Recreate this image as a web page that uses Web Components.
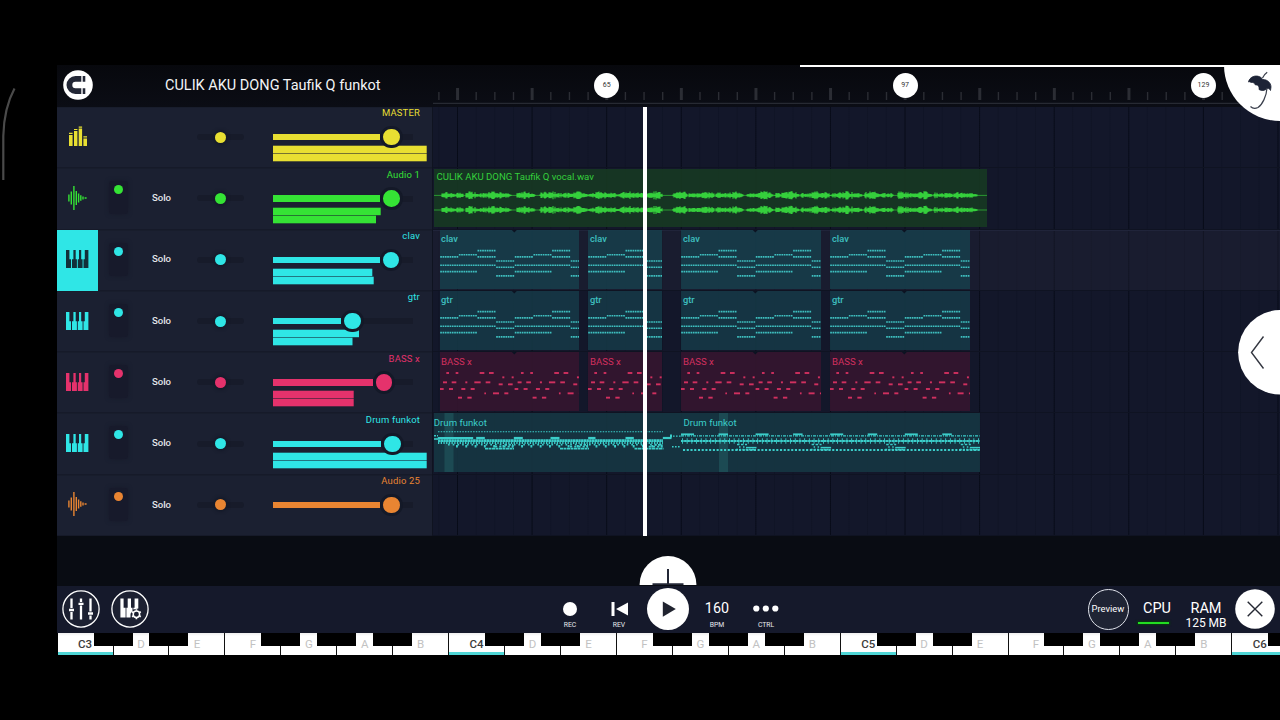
<!DOCTYPE html>
<html lang="en">
<head>
<meta charset="utf-8">
<title>CULIK AKU DONG Taufik Q funkot</title>
<style>
  html, body { margin: 0; background: #000; }
  body { width: 1280px; height: 720px; overflow: hidden; font-family: Roboto, "Liberation Sans", sans-serif; }
</style>
</head>
<body>
<daw-app></daw-app>

<script>
const BAR8 = 74.6;          // eight bars on the time line
const YELLOW = '#e8df32', GREEN = '#35e335', CYAN = '#2fe6e6', PINK = '#e5326c', ORANGE = '#e98532';

let tracks = [
  { name: 'MASTER', icon: 'master', color: YELLOW, volume: 118.7, meters: [153.7, 153.7] },
  { name: 'Audio 1', icon: 'wave', color: GREEN, volume: 118.7, meters: [107.7, 103] },
  { name: 'clav', icon: 'piano', color: CYAN, volume: 118, meters: [99.3, 100.7], selected: true },
  { name: 'gtr', icon: 'piano', color: CYAN, volume: 79.7, meters: [86, 79.5] },
  { name: 'BASS x', icon: 'piano', color: PINK, volume: 111, meters: [80.7, 80.7] },
  { name: 'Drum funkot', icon: 'piano', color: CYAN, volume: 119.7, meters: [153.7, 153.7] },
  { name: 'Audio 25', icon: 'wave', color: ORANGE, volume: 118.7, meters: [0, 0] }
];

// gap = free space before the clip
let fourClips = (name, kind) => [
  { name, kind, gap: 6.6, width: 139.9 },
  { name, kind, gap: 9, width: 74 },
  { name, kind, gap: 19, width: 140 },
  { name, kind, gap: 9, width: 140 }
];
let lanes = [
  [],
  [{ name: 'CULIK AKU DONG Taufik Q vocal.wav', kind: 'audio', gap: 0.5, width: 553.5 }],
  fourClips('clav', 'clav'),
  fourClips('gtr', 'gtr'),
  fourClips('BASS x', 'bass'),
  [
    { name: 'Drum funkot', kind: 'drum1', gap: 0.5, width: 247.5 },
    { name: 'Drum funkot', kind: 'drum2', gap: 0, width: 298.6 }
  ],
  []
];

const icons = {
  master: `<svg width="22" height="24" viewBox="0 0 22 24" fill="currentColor">
    <path d="M2 10h3.6v11H2zM7 6h3.4v15H7zM11.7 3.6h3.4V21h-3.4zM16.4 13.5H20V21h-3.6z"/>
    <path d="M2 7.8h3.6v1.2H2zM7 3.9h3.4v1.2H7zM11.7 1.5h3.4v1.2h-3.4zM16.4 11.3H20v1.1h-3.6z"/></svg>`,
  wave: `<svg width="22" height="26" viewBox="0 0 22 26" stroke="currentColor" stroke-width="1.4">
    <path d="M1.9 9.5v7M4.3 6.5v13M6.9 1v24M9.3 6v14M11.6 8.6v8.8M13.8 10.3v5.4M16 11.5v3M17.6 13h2"/></svg>`,
  piano: `<svg width="22.4" height="18" viewBox="0 0 22.4 18" fill="currentColor">
    <path d="M0 0h3.4v9.2H5V18H0zM7.4 0h2.3v9.2h1.2V18H6V9.2h1.4zM13 0h2.2v9.2h1.4V18h-4.8V9.2H13zM18.8 0h3.6v18h-4.9V9.2h1.3z"/></svg>`
};

class TrackHeader extends HTMLElement {
  constructor() {
    super();
    this.attachShadow({ mode: 'open' });
  }
  connectedCallback() {
    const t = this.track;
    const master = t.icon === 'master';
    this.shadowRoot.innerHTML = `
      <style>
        :host {
          display: grid; grid-template-columns: 41px 41.5px 44px 73px 1fr;
          height: 61.3px; box-sizing: border-box; background: #1b2031;
          border-bottom: 1px solid #161a29; border-top: 1px solid #181d2c; color: ${t.color};
        }
        .icon { display: flex; align-items: center; justify-content: center; padding-bottom: 2px; }
        .icon svg { display: block; }
        .icon.selected { background: ${CYAN}; color: #123039; margin: -1px 0; }
        .mute { display: flex; justify-content: center; padding-top: 12px; }
        .mute i { width: 19px; height: 33px; border-radius: 3px; background: #171a2b; box-shadow: 0 0 4px #171a2b; display: flex; justify-content: center; }
        .mute b { width: 9px; height: 9px; margin-top: 4px; border-radius: 50%; background: currentColor; }
        .solo { color: #e4e6ea; font-size: 9.6px; font-weight: 500; line-height: 12px; padding-top: 22.8px; text-align: center; }
        .pan { display: flex; align-items: center; justify-content: center; padding-bottom: 1px; }
        .pan i { width: 47px; height: 6px; border-radius: 3px; background: #171b2a; display: flex; align-items: center; justify-content: center; }
        .pan b { width: 11px; height: 11px; border-radius: 50%; background: currentColor; box-shadow: 0 0 3px 2px #151a29; }
        .right { display: flex; flex-direction: column; padding-left: 16.5px; }
        .name { font-size: 9.45px; letter-spacing: .02em; line-height: 12px; height: 12px; margin-top: -.6px; padding-right: 12px; text-align: right; white-space: pre; }
        .vol { display: flex; align-items: center; height: 16px; margin-top: 9.9px; width: 140px; z-index: 1;
          background: linear-gradient(#171b2a, #171b2a) 0 5px / 140px 6px no-repeat; }
        .fill { height: 6.4px; width: ${t.volume - 11.5}px; background: currentColor; }
        .knob { width: 16.4px; height: 16.4px; border-radius: 50%; background: currentColor; border: 3.3px solid #141928; margin: -3.5px 0 -3.5px .1px; flex: none; }
        .meter { display: block; overflow: visible; }
      </style>
      <div class="icon ${t.selected ? 'selected' : ''}">${icons[t.icon]}</div>
      <div class="mute">${master ? '' : '<i><b></b></i>'}</div>
      <div class="solo">${master ? '' : 'Solo'}</div>
      <div class="pan"><i><b></b></i></div>
      <div class="right">
        <div class="name"><slot></slot></div>
        <div class="vol"><div class="fill"></div><div class="knob"></div></div>
        <svg class="meter" width="154" height="17" fill="currentColor">
          <rect y=".7" width="${t.meters[0]}" height="7.5"/>
          <rect y="8.7" width="${t.meters[1]}" height="7.6"/>
        </svg>
      </div>`;
  }
}

// one horizontal run of notes
function run(x1, x2, y, h, dash) {
  return `<path d="M${x1} ${y}H${x2}" stroke-width="${h}" ${dash ? `stroke-dasharray="${dash}"` : ''}/>`;
}

function drawChords(width) {
  const seg = BAR8 / 4;
  const rows = [[26.9, 35.3, 41.6], [24.7, 35.3, 41.6], [20.6, 26.9, 35.3], [31, 37.3, 45.9]];
  let out = '';
  for (let i = 0; i * seg < width; i++) {
    for (const y of rows[i % 4]) {
      out += run(i * seg + 0.2, (i + 1) * seg - 0.2, y, 1.6, '1.7 .63');
    }
  }
  return out;
}

function drawBass(width) {
  // x1, x2, y in thirds of a pixel
  const notes = [
    [19, 27, 69], [47, 55, 69], [119, 133, 69], [147, 161, 69], [187, 193, 82], [215, 221, 82],
    [9, 21, 97], [35, 49, 97], [76, 82, 97], [103, 122, 97], [137, 151, 97], [176, 188, 103], [204, 218, 103],
    [0, 11, 117], [27, 39, 117], [64, 76, 117], [92, 104, 117], [133, 138, 130], [159, 177, 130], [193, 205, 130],
    [54, 66, 143], [82, 95, 143]
  ];
  let out = '';
  for (let r = 0; r * BAR8 < width; r++) {
    for (const [a, b, y] of notes) {
      out += run(a / 3 + r * BAR8, b / 3 + r * BAR8, y / 3 - 2, 1.9, '');
    }
  }
  return out;
}

function drawDrumIntro() {
  let out = run(4, 229, 18.7, 1.1, '1.5 1.2') + run(0, 4, 22.8, 1.4, '2 1') + run(0, 4, 26, 1.6, '');
  for (const [a, b] of [[22, 128], [137, 163], [250, 277], [360, 387], [473, 495], [585, 610], [697, 723]]) {
    out += run(a / 3 - 3.5, b / 3 - 3.5, 25, 2.2, '');
  }
  out += run(4, 229, 27.7, 2.8, '2.4 .3') + run(4, 229, 29.6, 2.6, '1.3 1.4') + run(22, 229, 33.2, 2.4, '1.9 7.4') + run(14, 229, 31.6, 1.8, '1.7 3');
  for (const a of [51, 126, 200.5]) {
    out += run(a, a + 29, 35.6, 1.6, '3 .5') + run(a + 10, a + 28, 33.6, 1.9, '2.2 2') + run(a + 20, a + 28, 31.8, 1.8, '2 1.5');
  }
  return out + run(236, 238, 23, 3, '') + run(239, 247, 23.2, 1.3, '1.6 1.4') + run(238, 247, 33.8, 1.5, '1.6 1.4');
}

function drawDrumLoop(width) {
  let out = run(0, width, 22.9, 1.4, '3 1 1 1') + run(0, width, 28, 2.2, '2.7 .4') + run(1, width, 28, 5.4, '.9 3.8') + run(2, width, 37, 2.2, '2.1 1.63');
  for (let r = 0; r < 4; r++) {
    const x = r * BAR8;
    out += run(x, x + 13, 21.3, 1.8, '') + run(x + 37.5, x + 47, 21.3, 1.8, '');
    out += run(x + 55, x + 75, 36.6, 1.6, '2 1.2') + run(x + 65, x + 75.5, 34.6, 1.5, '') + run(x + 56, x + 66, 31.6, 1.5, '2.5 1.5') + run(x + 58, x + 66, 34, 1.7, '1.5 2.5');
  }
  return out;
}

function drawWave() {
  // loud parts of the recording, start and end
  const parts = [[8, 30], [32, 78], [83, 102], [106, 138], [138, 155], [155, 174], [174, 229],
    [239, 254], [255, 281], [282, 310], [313, 340], [341, 366], [367, 398], [398, 429], [430, 460], [464, 499], [500, 520], [520, 544]];
  let out = '';
  for (const mid of [26.4, 41]) {
    let d = '';
    parts.forEach(([a, b], p) => {
      for (let x = a; x < b; x += 1) {
        const edge = Math.min(1, (b - x) / 5 + 0.25, (x - a) / 2 + 0.6);
        const noise = Math.abs(Math.sin(x * 12.99 + p) * 43758.5) % 1;
        const swell = 0.82 + 0.25 * Math.sin(x / 4.3);
        const up = (1.5 + noise * 2.6) * edge * swell;
        d += `M${x} ${(mid - up).toFixed(1)}v${(up * 1.95).toFixed(1)}`;
      }
    });
    out += `<path d="${d}" stroke-width="1.15"/><path d="M0 ${mid}H553.5" stroke-width=".8" opacity=".8"/>`;
  }
  return out;
}

const kinds = {
  audio: { bg: 'rgba(23,57,34,.9)', fg: '#35cf3c', top: 0.5, height: 58.5, draw: drawWave, pad: '2.5px 0 0 3px' },
  clav: { bg: 'rgba(23,62,75,.88)', fg: '#3fc0c0', top: 0.5, height: 58.5, draw: drawChords, pad: '2.6px 0 0 1.5px' },
  gtr: { bg: 'rgba(22,57,71,.88)', fg: '#3fc0c0', top: 0.5, height: 58.5, draw: drawChords, pad: '3px 0 0 1.5px' },
  bass: { bg: 'rgba(52,22,47,.92)', fg: '#d1305f', top: 0.2, height: 59, draw: drawBass, pad: '4px 0 0 1.5px' },
  drum1: { bg: 'rgba(22,54,67,.9)', fg: '#3bcdc9', top: 0, height: 59, draw: drawDrumIntro, glow: 10.5, pad: '4px 0 0 .3px' },
  drum2: { bg: 'rgba(22,54,67,.9)', fg: '#3bcdc9', top: 0, height: 59, draw: drawDrumLoop, glow: 38, pad: '4px 0 0 2.5px' }
};

class PatternClip extends HTMLElement {
  constructor() {
    super();
    this.attachShadow({ mode: 'open' });
  }
  connectedCallback() {
    const c = this.clip;
    const k = kinds[c.kind];
    const bold = c.kind === 'clav' || c.kind === 'gtr';
    const loop = c.width > 130 && c.width < 150;
    this.shadowRoot.innerHTML = `
      <style>
        :host { display: grid; flex: none; width: ${c.width}px; height: ${k.height}px; margin: ${k.top}px 0 0 ${c.gap}px; background: ${k.bg}; color: ${k.fg}; overflow: hidden; }
        .label, svg { grid-area: 1 / 1; }
        .label { font-size: ${bold ? 9.3 : 9.6}px; font-weight: ${bold ? 500 : 400}; line-height: 12px; padding: ${k.pad}; white-space: nowrap; }
      </style>
      <svg width="${c.width}" height="${k.height}" fill="none" stroke="currentColor">
        ${k.glow ? `<rect x="${k.glow}" width="9" height="59" fill="#2f8a86" opacity=".28" stroke="none"/>` : ''}
        ${loop ? '<path d="M71.8 0h5l-2.500 2.600z" fill="#0c1322" stroke="none"/>' : ''}
        ${k.draw(c.width)}
      </svg>
      <div class="label"><slot></slot></div>`;
  }
}

class PlayList extends HTMLElement {
  constructor() {
    super();
    this.attachShadow({ mode: 'open' });
    this.shadowRoot.innerHTML = `
      <style>
        :host {
          display: block; position: relative; overflow: hidden;
          background:
            linear-gradient(90deg, rgba(3,6,16,.6) 1.3px, transparent 1.3px) 24px 0 / 74.6px 100%,
            linear-gradient(90deg, rgba(4,8,20,.2) 1px, transparent 1px) 5.4px 0 / 18.65px 100%,
            #13172a;
        }
        .lane { display: flex; height: 61.3px; box-sizing: border-box; border-bottom: 1px solid #0f1322; }
        .lane.selected { background: rgba(40,40,58,.32); box-shadow: inset 0 1px #20243a; }
        .playhead { position: absolute; left: 210px; top: 0; width: 4px; height: 100%; background: #fff; }
      </style>
      ${lanes.map((l, i) => `<div class="lane ${tracks[i].selected ? 'selected' : ''}"></div>`).join('')}
      <div class="playhead"></div>`;
    this.shadowRoot.querySelectorAll('.lane').forEach((lane, i) => {
      for (const c of lanes[i]) {
        const el = document.createElement('pattern-clip');
        el.clip = c;
        el.textContent = c.name;
        lane.appendChild(el);
      }
    });
  }
}

class TimeRuler extends HTMLElement {
  constructor() {
    super();
    this.attachShadow({ mode: 'open' });
    let ticks = '';
    for (let i = 0; i < 46; i++) {
      const x = 5.9 + i * BAR8 / 4;
      const big = i % 4 === 1;
      ticks += big ? `<path d="M${x} 23v12" stroke-width="3"/>` : `<path d="M${x} 27v8" stroke-width="1.4"/>`;
    }
    this.shadowRoot.innerHTML = `
      <style>
        :host { display: block; position: relative; height: 42px; }
        svg { display: block; }
        .mark { position: absolute; top: 8px; width: 25px; height: 25px; border-radius: 50%; background: #fff; color: #333; font-size: 7px; line-height: 24px; text-align: center; }
      </style>
      <svg width="847" height="42" fill="none" stroke="#2b2d34">${ticks}<path d="M0 38.4H847" stroke="#272a33" stroke-width="1.2"/></svg>
      <div class="mark" style="left:161.2px">65</div>
      <div class="mark" style="left:459.6px">97</div>
      <div class="mark" style="left:758px">129</div>`;
  }
}

class TopBar extends HTMLElement {
  constructor() {
    super();
    this.attachShadow({ mode: 'open' });
    this.shadowRoot.innerHTML = `
      <style>
        :host { display: grid; grid-template-columns: 42px 334px 847px; align-items: center; background: linear-gradient(#07080d, #0b0d15); }
        .magnet { display: block; margin: -2px 0 0 5.5px; }
        h1 { margin: -2px 0 0; padding-left: 66px; font-size: 14.5px; font-weight: 400; color: #f3f4f6; white-space: nowrap; }
      </style>
      <svg class="magnet" width="30" height="30" viewBox="0 0 30 30">
        <circle cx="15" cy="15" r="14.8" fill="#fff"/>
        <path d="M18.3 8.900H12.500a6.100 6.100 0 0 0 0 12.200h5.800" fill="none" stroke="#232736" stroke-width="5.800"/>
        <path d="M19.700 6h2.600v5.800h-2.600zM19.700 18.200h2.600v5.800h-2.600z" fill="#232736"/>
      </svg>
      <h1><slot></slot></h1>
      <time-ruler></time-ruler>`;
  }
}

class TransportButton extends HTMLElement {
  constructor() {
    super();
    this.attachShadow({ mode: 'open' });
    this.shadowRoot.innerHTML = `
      <style>
        :host { display: flex; flex-direction: column; align-items: center; width: 49px; height: 47px; color: #fff; }
        .face { display: flex; align-items: center; justify-content: center; height: 20px; margin-top: 13px; font-size: 14.3px; line-height: 18px; letter-spacing: .2px; }
        .label { font-size: 6.8px; line-height: 8px; margin-top: 2px; color: #e8e9ee; }
      </style>
      <div class="face"><slot></slot></div>
      <div class="label">${this.getAttribute('label')}</div>`;
  }
}

class TransportBar extends HTMLElement {
  constructor() {
    super();
    this.attachShadow({ mode: 'open' });
    this.shadowRoot.innerHTML = `
      <style>
        :host { display: grid; grid-template-columns: 488.5px 245px 1fr; grid-template-rows: 47px; background: #15192b; color: #fff; }
        .group { display: flex; align-items: center; height: 46px; }
        .left { gap: 11px; padding-left: 5px; }
        .play { display: block; width: 42px; margin: 0 3.5px; }
        .number { display: block; padding-bottom: 2px; }
        .preview { width: 39px; height: 39px; margin-left: 297px; border: 1.400px solid #dfe2ea; border-radius: 50%; background: #1f2434; font-size: 9.400px; line-height: 38px; text-align: center; flex: none; box-sizing: content-box; }
        .stat { display: flex; flex-direction: column; align-items: center; width: 49px; height: 47px; flex: none; white-space: nowrap; }
        .stat b { font-weight: 400; font-size: 14.500px; line-height: 18px; margin-top: 14px; }
        .stat span { font-size: 12px; line-height: 14px; margin-top: -2px; }
        .stat i { width: 31px; height: 2.400px; margin: 4.300px 7px 0 0; background: #22dd22; box-shadow: 0 0 2px 1px #0a3a10; }
        .close { flex: none; margin-left: 4px; }
        svg { display: block; }
      </style>
      <div class="group left">
        <svg width="38" height="38" viewBox="0 0 38 38" fill="none" stroke="#fff">
          <circle cx="19" cy="19" r="18.100" stroke-width="1.300" fill="#1c2031"/>
          <path d="M9.500 8.500v9.500M9.500 22v7.500M19 8.500v3.500M19 15.500v14M28.500 8.500v13M28.500 25.500v4" stroke-width="2.300"/>
          <path d="M7 20h5M16.500 13.800h5M26 23.500h5" stroke-width="2.300"/>
        </svg>
        <svg width="38" height="38" viewBox="0 0 38 38" fill="none" stroke="#fff">
          <circle cx="19" cy="19" r="18.100" stroke-width="1.300" fill="#1c2031"/>
          <path d="M9.400 8.500h3.200v9.200h2v9.800H9.400zM15.400 17.700h1.300V8.500h3.300v9.200h1.500v3l-2 3v3.800h-4.100zM22.400 17.700h1.200V8.500h3.700v10l-4.900 1z" fill="#fff" stroke="none"/>
          <circle cx="25.400" cy="24.200" r="3.200" stroke-width="1.500" fill="#1c2031"/>
          <path d="M25.400 19.200v1.500M25.400 27.700v1.500M21 21.700l1.300.8M28.500 25.900l1.300.8M21 26.700l1.300-.8M28.500 22.500l1.300-.8" stroke-width="1.700"/>
        </svg>
      </div>
      <div class="group">
        <transport-button label="REC"><svg width="14" height="14"><circle cx="7" cy="7" r="7" fill="#fff"/></svg></transport-button>
        <transport-button label="REV"><svg width="17" height="14"><path d="M.5 0h3v14h-3zM17 .5v13L5 7z" fill="#fff"/></svg></transport-button>
        <svg class="play" width="42" height="42" viewBox="0 0 42 42"><circle cx="21" cy="21" r="21" fill="#fff"/><path d="M15.800 13.500v15.200l13-7.600z" fill="#20232f"/></svg>
        <transport-button label="BPM"><span class="number">160</span></transport-button>
        <transport-button label="CTRL"><svg width="26" height="7" fill="#fff"><circle cx="3.300" cy="3.500" r="3.100"/><circle cx="12.800" cy="3.500" r="3.100"/><circle cx="22.300" cy="3.500" r="3.100"/></svg></transport-button>
      </div>
      <div class="group">
        <div class="preview">Preview</div>
        <div class="stat" style="margin-left:4px"><b>CPU</b><i></i></div>
        <div class="stat"><b>RAM</b><span>125 MB</span></div>
        <svg class="close" width="40" height="40" viewBox="0 0 40 40"><circle cx="20" cy="20" r="19.800" fill="#fff"/><path d="M12.700 12.700l14.600 14.600M27.300 12.700L12.700 27.300" stroke="#252833" stroke-width="1.400"/></svg>
      </div>`;
  }
}

class PianoKey extends HTMLElement {
  constructor() {
    super();
    this.attachShadow({ mode: 'open' });
  }
  connectedCallback() {
    const root = this.textContent.startsWith('C');
    this.shadowRoot.innerHTML = `
      <style>
        :host { display: block; position: relative; flex: none; width: 55.95px; height: 22px; box-sizing: border-box;
          border-right: 1.3px solid #111; background: linear-gradient(#eee, #fff 3px); text-align: center;
          font-size: 11.5px; line-height: 23px; color: ${root ? '#3c3c3c' : '#c2c2c2'}; font-weight: ${root ? 500 : 400}; }
        .root { position: absolute; left: 0; right: 0; bottom: 0; height: 3px; background: #4fd6d6; }
        .black { position: absolute; z-index: 1; right: -20px; top: 0; width: 39px; height: 13.3px; background: #000; }
      </style>
      <slot></slot>
      ${root ? '<div class="root"></div>' : ''}
      ${/[EB]/.test(this.textContent) ? '' : '<div class="black"></div>'}`;
  }
}

class PianoKeys extends HTMLElement {
  constructor() {
    super();
    this.attachShadow({ mode: 'open' });
    let keys = '';
    for (let octave = 3; octave < 6; octave++) {
      for (const n of ['C' + octave, 'D', 'E', 'F', 'G', 'A', 'B']) {
        keys += `<piano-key>${n}</piano-key>`;
      }
    }
    this.shadowRoot.innerHTML = `
      <style>:host { display: flex; overflow: hidden; height: 22px; padding-left: .6px; }</style>
      ${keys}<piano-key>C6</piano-key>`;
  }
}

class DawApp extends HTMLElement {
  constructor() {
    super();
    this.attachShadow({ mode: 'open' });
    this.shadowRoot.innerHTML = `
      <style>
        :host { display: grid; position: relative; box-sizing: border-box; width: 1280px; height: 720px;
          padding: 65px 0 65px 57px; grid-template-rows: 42px 429px 50px 47px 22px; overflow: hidden; }
        .main { display: grid; grid-template-columns: 376px 847px; overflow: hidden; }
        .tracks { border-right: 1px solid #0f1320; }
        .empty { background: #090c13; display: flex; justify-content: center; align-items: flex-end; padding-right: 1.4px; }
        .empty svg { display: block; margin-bottom: 1px; }
        .progress { position: absolute; left: 800px; top: 65px; width: 480px; height: 2px; background: #fff; }
        .edge { position: absolute; left: 0; top: 84px; }
        .logo { position: absolute; right: 0; top: 65px; }
        .tab { position: absolute; right: 0; top: 310px; }
      </style>
      <top-bar>CULIK AKU DONG Taufik Q funkot</top-bar>
      <div class="main">
        <div class="tracks"></div>
        <play-list></play-list>
      </div>
      <div class="empty">
        <svg width="58" height="29" viewBox="0 0 58 29"><circle cx="29" cy="28.5" r="28.4" fill="#fff"/><path d="M29 13v16M13.5 28.2h31" stroke="#232736" stroke-width="2"/></svg>
      </div>
      <transport-bar></transport-bar>
      <piano-keys></piano-keys>

      <svg class="edge" width="20" height="100" fill="none"><path d="M3.3 96V52Q4 24 14.5 4.5" stroke="#4a4a4a" stroke-width="2.2"/></svg>
      <div class="progress"></div>
      <svg class="logo" width="56" height="56" viewBox="0 0 56 56">
        <circle cx="56" cy="0" r="56" fill="#fff"/>
        <path d="M24.500 17C25.500 12 31 10 35 11.500C37 12.200 38 13.500 39 14.500C43 14.500 47 17.500 47 22L46.500 25.500C45.500 23.500 44 23 42.500 24C40.500 25.800 37.500 26 35 24.500C35.500 21.500 34 19.500 31.500 20C30.500 18 28.500 17 27 17.500C26 16.800 25.500 16.500 24.500 17Z" fill="#1d2336" stroke="#1d2336" stroke-width=".800"/>
        <path d="M43.200 7.300Q40 9.500 38.500 13M43 23C42.500 31 38.500 39.500 34 42.500Q29.500 44.500 26.500 41.500" fill="none" stroke="#3a3f4c" stroke-width="1.200"/>
      </svg>
      <svg class="tab" width="42" height="85" viewBox="0 0 42 85">
        <circle cx="42.300" cy="42.300" r="42.200" fill="#fff"/>
        <path d="M25.500 26.500L13.500 42.500L25.500 58.500" fill="none" stroke="#333640" stroke-width="1.400"/>
      </svg>`;
    const list = this.shadowRoot.querySelector('.tracks');
    for (const t of tracks) {
      const el = document.createElement('track-header');
      el.track = t;
      el.textContent = t.name;
      list.appendChild(el);
    }
  }
}

customElements.define('track-header', TrackHeader);
customElements.define('pattern-clip', PatternClip);
customElements.define('play-list', PlayList);
customElements.define('time-ruler', TimeRuler);
customElements.define('top-bar', TopBar);
customElements.define('transport-button', TransportButton);
customElements.define('transport-bar', TransportBar);
customElements.define('piano-key', PianoKey);
customElements.define('piano-keys', PianoKeys);
customElements.define('daw-app', DawApp);
</script>
</body>
</html>
